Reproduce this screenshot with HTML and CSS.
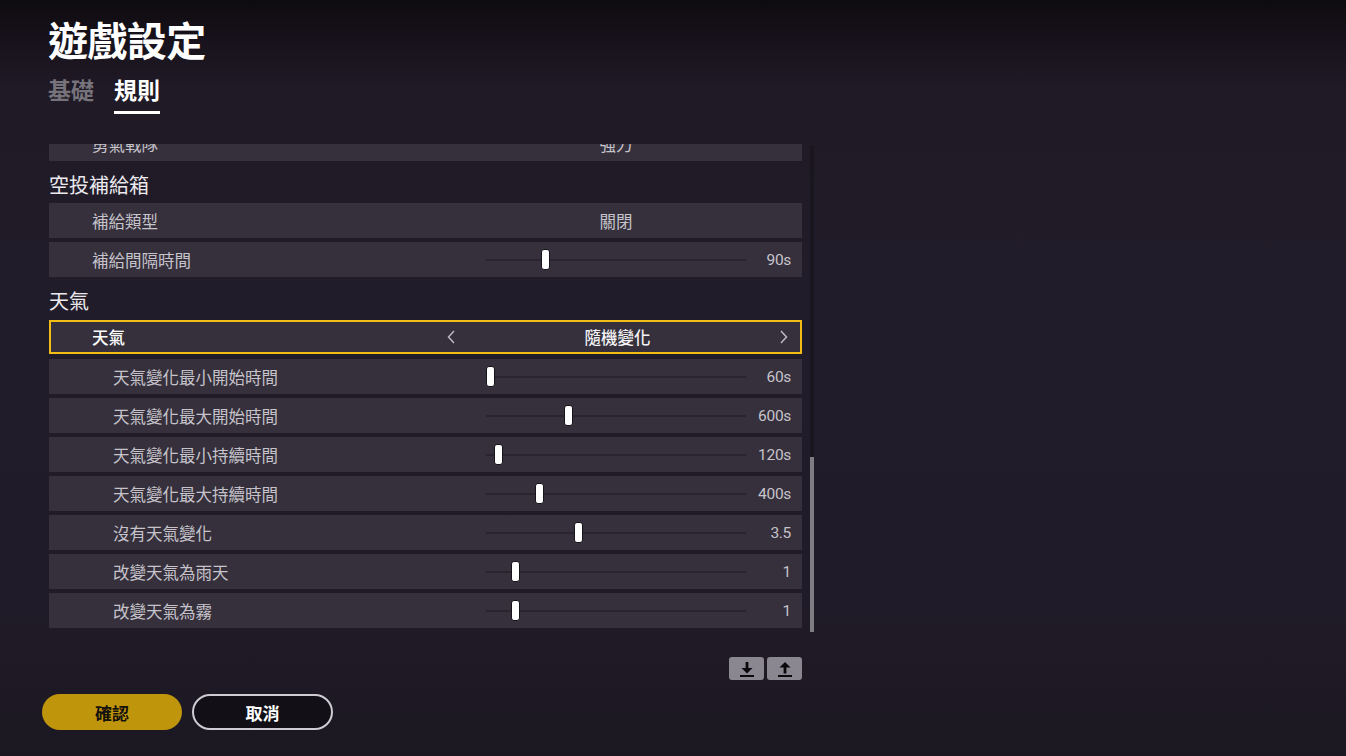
FILE: index.html
```html
<!DOCTYPE html>
<html lang="zh-Hant">
<head>
<meta charset="utf-8">
<title>遊戲設定</title>
<link rel="stylesheet" href="styles.css">
</head>
<body>
<div class="page">
  <header class="header">
    <h1 class="title">遊戲設定</h1>
    <nav class="tabs">
      <span class="tab">基礎</span>
      <span class="tab active">規則</span>
    </nav>
  </header>

  <div class="list-area">
    <div class="list">
      <div class="list-inner">
        <div class="row select">
          <span class="label">勇氣戰隊</span>
          <span class="choice">強力</span>
        </div>

        <div class="section">空投補給箱</div>
        <div class="row select">
          <span class="label">補給類型</span>
          <span class="choice">關閉</span>
        </div>
        <div class="row">
          <span class="label">補給間隔時間</span>
          <span class="slider"><span class="thumb" style="left:55px"></span></span>
          <span class="value">90s</span>
        </div>

        <div class="section">天氣</div>
        <div class="row selector focused">
          <span class="label">天氣</span>
          <span class="picker">
            <svg class="chev" width="8" height="14" viewBox="0 0 8 14"><polyline points="7,1 1.5,7 7,13"/></svg>
            <span class="picked">隨機變化</span>
            <svg class="chev" width="8" height="14" viewBox="0 0 8 14"><polyline points="1,1 6.5,7 1,13"/></svg>
          </span>
        </div>
        <div class="row sub">
          <span class="label">天氣變化最小開始時間</span>
          <span class="slider"><span class="thumb" style="left:0px"></span></span>
          <span class="value">60s</span>
        </div>
        <div class="row sub">
          <span class="label">天氣變化最大開始時間</span>
          <span class="slider"><span class="thumb" style="left:78px"></span></span>
          <span class="value">600s</span>
        </div>
        <div class="row sub">
          <span class="label">天氣變化最小持續時間</span>
          <span class="slider"><span class="thumb" style="left:8px"></span></span>
          <span class="value">120s</span>
        </div>
        <div class="row sub">
          <span class="label">天氣變化最大持續時間</span>
          <span class="slider"><span class="thumb" style="left:49px"></span></span>
          <span class="value">400s</span>
        </div>
        <div class="row sub">
          <span class="label">沒有天氣變化</span>
          <span class="slider"><span class="thumb" style="left:88px"></span></span>
          <span class="value">3.5</span>
        </div>
        <div class="row sub">
          <span class="label">改變天氣為雨天</span>
          <span class="slider"><span class="thumb" style="left:25px"></span></span>
          <span class="value">1</span>
        </div>
        <div class="row sub">
          <span class="label">改變天氣為霧</span>
          <span class="slider"><span class="thumb" style="left:25px"></span></span>
          <span class="value">1</span>
        </div>
      </div>
    </div>
    <div class="scrollbar"><div class="scroll-thumb"></div></div>
  </div>

  <div class="io-bar">
    <button class="io-btn" title="匯入">
      <svg width="16" height="16" viewBox="0 0 16 16"><rect x="6.6" y="1" width="2.8" height="6.5"/><polygon points="2.5,7 13.5,7 8,12.5"/><rect x="1" y="14" width="14" height="2"/></svg>
    </button>
    <button class="io-btn" title="匯出">
      <svg width="16" height="16" viewBox="0 0 16 16"><polygon points="2.5,6.5 13.5,6.5 8,1"/><rect x="6.6" y="6" width="2.8" height="6.5"/><rect x="1" y="14" width="14" height="2"/></svg>
    </button>
  </div>

  <footer class="footer">
    <button class="btn confirm">確認</button>
    <button class="btn cancel">取消</button>
  </footer>
</div>
</body>
</html>
```

FILE: styles.css
```css
* { box-sizing: border-box; }

html, body {
  margin: 0;
  padding: 0;
  height: 100%;
}

body {
  font-family: "Noto Sans CJK TC", "Noto Sans", sans-serif;
  color: #c6c3ca;
  background: linear-gradient(180deg, #0e0b0f 0px, #17121b 40px, #1f1a26 90px, #211c29 300px, #201b28 600px, #1c1822 756px);
  overflow: hidden;
}

.page {
  display: flex;
  flex-direction: column;
  height: 756px;
}

.header {
  padding: 15px 0 0 48px;
}

.title {
  margin: 0;
  font-size: 40px;
  line-height: 48px;
  font-weight: 700;
  color: #ffffff;
  letter-spacing: -0.6px;
}

.tabs {
  display: flex;
  gap: 20px;
  margin-top: 10px;
}

.tab {
  font-size: 23px;
  line-height: 32px;
  font-weight: 700;
  color: #77737b;
  padding-bottom: 6px;
  border-bottom: 3px solid transparent;
}

.tab.active {
  color: #ffffff;
  border-bottom-color: #ffffff;
}

.list-area {
  display: flex;
  gap: 8px;
  margin: 30px 0 0 49px;
  height: 488px;
}

.list {
  width: 753px;
  height: 100%;
  overflow: hidden;
}

.list-inner {
  margin-top: -18px;
}

.section {
  height: 38px;
  display: flex;
  align-items: center;
  font-size: 20px;
  color: #ebe9ee;
}

.section + .row.selector {
  margin-top: 1px;
}

.row {
  display: grid;
  grid-template-columns: 437px 260px 1fr;
  align-items: center;
  height: 35px;
  margin-bottom: 4px;
  background: #35303c;
  font-size: 16.5px;
}

.row .label {
  padding-left: 43px;
  white-space: nowrap;
}

.row.sub .label {
  padding-left: 64px;
}

.row.select .choice {
  grid-column: 2;
  text-align: center;
}

.slider {
  position: relative;
  height: 2px;
  background: #29242f;
}

.thumb {
  position: absolute;
  top: -10px;
  width: 9px;
  height: 21px;
  background: #ffffff;
  border: 1px solid #17131b;
  border-radius: 3px;
}

.value {
  text-align: right;
  padding-right: 11px;
  font-family: "Roboto", "Liberation Sans", sans-serif;
  font-size: 15.5px;
  letter-spacing: -0.3px;
  color: #c6c3ca;
}

.row.selector {
  grid-template-columns: 1fr 345px;
  height: 34px;
  padding-right: 10px;
  border: 2px solid #f2be16;
  margin-bottom: 5px;
}

.row.selector .label {
  padding-left: 41px;
  color: #ffffff;
  font-weight: 500;
}

.picker {
  display: flex;
  align-items: center;
  justify-content: space-between;
  padding: 0 2px;
}

.picked {
  color: #f4f2f6;
  font-weight: 500;
}

.chev polyline {
  fill: none;
  stroke: #bdb9c2;
  stroke-width: 1.5;
}

.scrollbar {
  width: 4px;
  height: 487px;
  margin-top: 1px;
  background: #1a1620;
  display: flex;
  flex-direction: column;
}

.scroll-thumb {
  margin-top: auto;
  height: 175px;
  background: #7f7c82;
}

.io-bar {
  display: flex;
  justify-content: flex-end;
  gap: 3px;
  width: 802px;
  margin-top: 25px;
}

.io-btn {
  width: 35px;
  height: 23px;
  padding: 0;
  border: none;
  border-radius: 3px;
  background: #8b8791;
  display: flex;
  align-items: center;
  justify-content: center;
}

.io-btn svg {
  fill: #0b090c;
}

.footer {
  display: flex;
  gap: 10px;
  margin: 14px 0 0 42px;
}

.btn {
  width: 141px;
  height: 36px;
  border-radius: 18px;
  font-family: "Noto Sans CJK TC", sans-serif;
  font-size: 17px;
  font-weight: 700;
  padding: 0;
}

.btn.confirm {
  background: #bf960b;
  border: none;
  color: #15110c;
  width: 140px;
}

.btn.cancel {
  background: #120f16;
  border: 2px solid #cfcbd3;
  color: #ffffff;
}
```
